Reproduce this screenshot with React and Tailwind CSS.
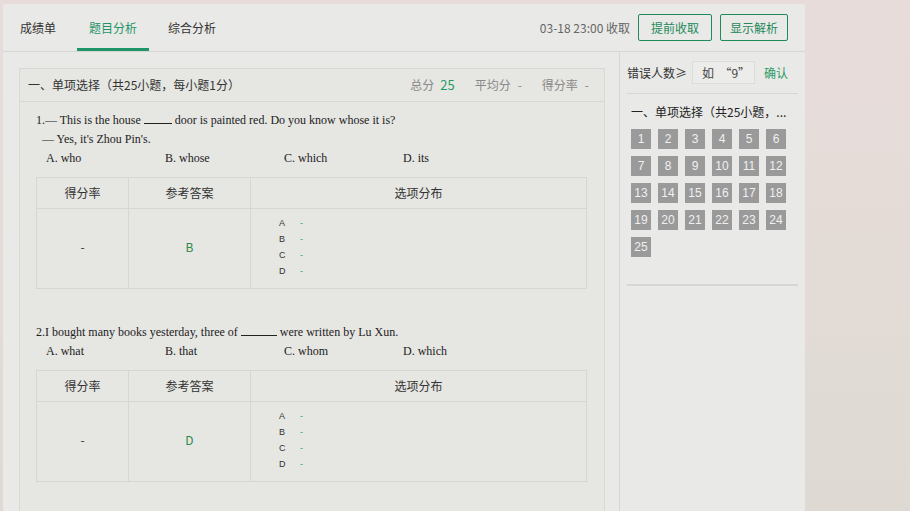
import React from "react";

const cjk = { fontFamily: '"Noto Sans CJK SC", "Noto Sans", sans-serif' };
const serif = { fontFamily: '"Liberation Serif", "Noto Sans CJK SC", serif' };

const questions = [
  {
    lines: [
      <>
        1.— This is the house <span className="inline-block w-[28px] border-b border-[#222] align-baseline" /> door is painted red. Do you know whose it is?
      </>,
      <span className="pl-[6px]">— Yes, it's Zhou Pin's.</span>,
    ],
    options: ["A. who", "B. whose", "C. which", "D. its"],
    answer: "B",
  },
  {
    lines: [
      <>
        2.I bought many books yesterday, three of <span className="inline-block w-[36px] border-b border-[#222] align-baseline" /> were written by Lu Xun.
      </>,
    ],
    options: ["A. what", "B. that", "C. whom", "D. which"],
    answer: "D",
  },
];

function Question({ q }) {
  return (
    <div>
      <div style={serif} className="text-[12px] leading-[19px] text-[#222]">
        {q.lines.map((l, i) => (
          <div key={i}>{l}</div>
        ))}
        <div className="flex pl-[10px]">
          {q.options.map((o) => (
            <div key={o} className="w-[119px]">
              {o}
            </div>
          ))}
        </div>
      </div>
      <table style={cjk} className="mt-[9px] w-[551px] border-collapse text-[12px] text-[#333]">
        <thead>
          <tr className="h-[31px]">
            <th className="w-[92px] border border-[#d6d6d2] font-normal">得分率</th>
            <th className="w-[122px] border border-[#d6d6d2] font-normal">参考答案</th>
            <th className="border border-[#d6d6d2] font-normal">选项分布</th>
          </tr>
        </thead>
        <tbody>
          <tr className="h-[80px]">
            <td className="border border-[#d6d6d2] pb-[4px] text-center">-</td>
            <td className="border border-[#d6d6d2] pb-[4px] text-center text-[#2a8a4a]">{q.answer}</td>
            <td className="border border-[#d6d6d2] pb-[2px] pl-[28px]">
              {["A", "B", "C", "D"].map((k) => (
                <div key={k} className="flex h-[16px] items-center text-[9px] leading-none" style={{ fontFamily: '"Liberation Sans", sans-serif' }}>
                  <span className="w-[21px] text-[#333]">{k}</span>
                  <span className="text-[#3aa070]">-</span>
                </div>
              ))}
            </td>
          </tr>
        </tbody>
      </table>
    </div>
  );
}

export default function App() {
  return (
    <div
      style={cjk}
      className="flex h-[511px] w-[910px] overflow-hidden bg-gradient-to-b from-[#e8dcda] to-[#dedad3] pl-[3px] pt-[4px]"
    >
      <div className="flex w-[802px] flex-col bg-[#e9e9e7]">
        {/* top bar */}
        <div className="flex h-[48px] shrink-0 items-stretch border-b border-[#d6d6d3] text-[12px]">
          <div className="ml-[5px] flex w-[60px] items-center justify-center text-[#333]">成绩单</div>
          <div className="ml-[9px] flex w-[72px] items-center justify-center border-b-[3px] border-[#1f9468] pt-[3px] text-[#1f9468]">
            题目分析
          </div>
          <div className="ml-[7px] flex w-[72px] items-center justify-center text-[#333]">综合分析</div>
          <div className="ml-auto mr-[17px] flex items-center">
            <span className="text-[#666]">03-18 23:00 收取</span>
            <button className="ml-[8px] h-[27px] w-[74px] rounded-[2px] border border-[#1f8a5a] text-[12px] text-[#1f8a5a]">
              提前收取
            </button>
            <button className="ml-[8px] h-[27px] w-[68px] rounded-[2px] border border-[#1f8a5a] text-[12px] text-[#1f8a5a]">
              显示解析
            </button>
          </div>
        </div>

        <div className="flex flex-1">
          {/* left */}
          <div className="w-[616px] shrink-0 pl-[16px] pr-[14px] pt-[16px]">
            <div className="h-full border border-b-0 border-[#d8d8d4] bg-[#e6e6e2]">
              <div className="flex h-[33px] items-center border-b border-[#d8d8d4] pl-[8px] pr-[15px] text-[12px] text-[#333]">
                <span>一、单项选择（共25小题，每小题1分）</span>
                <span className="ml-auto text-[#888]">总分</span>
                <span className="ml-[6px] text-[13px] text-[#2a9a64]">25</span>
                <span className="ml-[20px] text-[#888]">平均分</span>
                <span className="ml-[7px] text-[#888]">-</span>
                <span className="ml-[20px] text-[#888]">得分率</span>
                <span className="ml-[7px] text-[#888]">-</span>
              </div>
              <div className="pl-[16px] pt-[9px]">
                <Question q={questions[0]} />
                <div className="h-[34px]" />
                <Question q={questions[1]} />
              </div>
            </div>
          </div>

          {/* sidebar */}
          <div className="flex-1 border-l border-[#d6d6d3] px-[7px]">
            <div className="flex h-[41px] items-center text-[12px] text-[#333]">
              <span>错误人数≥</span>
              <div className="ml-[5px] flex h-[23px] w-[63px] items-center border border-[#dcdcd8] bg-[#ececea] pl-[9px] text-[#444]">
                如 &nbsp;“9”
              </div>
              <span className="ml-[9px] text-[#2a9a64]">确认</span>
            </div>
            <div className="border-t border-[#d6d6d3] pl-[4px] pt-[9px]">
              <div className="whitespace-nowrap text-[12px] text-[#222]">一、单项选择（共25小题，...</div>
              <div className="mt-[8px] grid grid-cols-[repeat(6,20px)] gap-[7px]">
                {Array.from({ length: 25 }, (_, i) => (
                  <div
                    key={i}
                    className="flex h-[20px] w-[20px] items-center justify-center bg-[#9a9a9a] text-[12px] text-[#f0f0f0]"
                    style={{ fontFamily: '"Liberation Sans", sans-serif' }}
                  >
                    {i + 1}
                  </div>
                ))}
              </div>
            </div>
            <div className="mt-[27px] border-t-2 border-[#d6d6d3]" />
          </div>
        </div>
      </div>
    </div>
  );
}
